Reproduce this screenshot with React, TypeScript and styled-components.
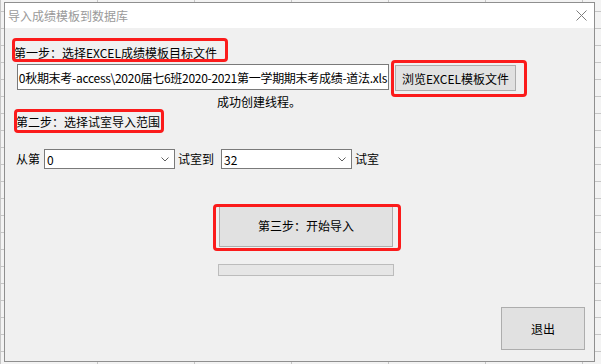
import React from "react";
import styled, { createGlobalStyle } from "styled-components";

const GlobalStyle = createGlobalStyle`
  html, body { margin: 0; padding: 0; }
  body {
    width: 601px;
    height: 364px;
    overflow: hidden;
    font-family: "Noto Sans CJK SC", "Noto Sans", sans-serif;
    font-size: 12px;
    color: #000;
  }
`;

const Page = styled.div`
  width: 601px;
  height: 364px;
  box-sizing: border-box;
  padding: 2px 0 0 4px;
  background-color: #f3f3f3;
  background-image: linear-gradient(#c6c6c6 1px, transparent 1px),
    linear-gradient(90deg, #c6c6c6 1px, transparent 1px);
  background-size: 100% 17px, 97px 100%;
  background-position: 0 -6px, 0 0;
`;

const Dialog = styled.div`
  width: 591px;
  height: 360px;
  box-sizing: border-box;
  border: 1px solid #8f8f8f;
  background: #f0f0f0;
  display: flex;
  flex-direction: column;
`;

const TitleBar = styled.div`
  flex: none;
  height: 25px;
  background: #fff;
  display: flex;
  align-items: center;
  justify-content: space-between;
  padding: 0 7px 0 3px;
`;

const Title = styled.span`
  color: #9a9a9a;
  font-size: 12px;
  line-height: 16px;
`;

const Body = styled.div`
  flex: 1;
  display: flex;
  flex-direction: column;
  align-items: flex-start;
`;

const Highlight = styled.div<{ $w: number; $h: number; $pad: string; $mt: number; $ml: number }>`
  position: relative;
  box-sizing: border-box;
  width: ${(p) => p.$w}px;
  height: ${(p) => p.$h}px;
  margin: ${(p) => p.$mt}px 0 0 ${(p) => p.$ml}px;
  padding: ${(p) => p.$pad};
  display: flex;
  align-items: flex-start;
  flex: none;
  &::after {
    content: "";
    position: absolute;
    inset: 0;
    border: 3px solid #fb1b1b;
    border-radius: 4px;
    pointer-events: none;
  }
`;

const Label = styled.span`
  font-size: 12px;
  line-height: 16px;
  white-space: nowrap;
`;

const Row = styled.div<{ $mt: number; $ml?: number }>`
  display: flex;
  align-items: flex-start;
  margin: ${(p) => p.$mt}px 0 0 ${(p) => p.$ml ?? 0}px;
`;

const TextBox = styled.div`
  box-sizing: border-box;
  width: 372px;
  height: 26px;
  margin: 4px 2px 0 12px;
  border: 1px solid #7a7a7a;
  background: #fff;
  padding: 0 1px 0 3px;
  display: flex;
  align-items: center;
  justify-content: flex-end;
  overflow: hidden;
  white-space: nowrap;
  font-size: 12px;
`;

const TextValue = styled.span`
  flex: none;
  letter-spacing: -0.28px;
`;

const WinButton = styled.button<{ $w: number; $h: number }>`
  box-sizing: border-box;
  width: ${(p) => p.$w}px;
  height: ${(p) => p.$h}px;
  margin: 0;
  padding: 0;
  background: #e1e1e1;
  border: 1px solid #adadad;
  font-family: inherit;
  font-size: 12px;
  color: #000;
  flex: none;
`;

const Status = styled.span`
  margin: -3px 0 0 212px;
  font-size: 12px;
  line-height: 16px;
`;

const RangeRow = styled.div`
  display: flex;
  align-items: center;
  height: 20px;
  margin: 16px 0 0 11px;
`;

const RangeText = styled.span<{ $ml?: number }>`
  margin-left: ${(p) => p.$ml ?? 0}px;
  font-size: 12px;
  line-height: 16px;
`;

const Combo = styled.div<{ $ml: number }>`
  box-sizing: border-box;
  width: 131px;
  height: 20px;
  margin-left: ${(p) => p.$ml}px;
  border: 1px solid #7a7a7a;
  background: #fff;
  display: flex;
  align-items: center;
  justify-content: space-between;
  padding: 0 5px 0 2px;
  font-size: 12px;
`;

const Progress = styled.div`
  box-sizing: border-box;
  width: 176px;
  height: 12px;
  margin: 13px 0 0 213px;
  background: #e6e6e6;
  border: 1px solid #bcbcbc;
`;

const ExitWrap = styled.div`
  margin: 31px 0 0 496px;
`;

const Chevron = () => (
  <svg width="8" height="5" viewBox="0 0 8 5">
    <polyline points="0.5,0.5 4,4 7.5,0.5" fill="none" stroke="#606060" strokeWidth="1" />
  </svg>
);

const CloseIcon = () => (
  <svg width="11" height="11" viewBox="0 0 11 11">
    <line x1="0.5" y1="0.5" x2="10.5" y2="10.5" stroke="#7d7d7d" strokeWidth="1" />
    <line x1="10.5" y1="0.5" x2="0.5" y2="10.5" stroke="#7d7d7d" strokeWidth="1" />
  </svg>
);

export default function App() {
  return (
    <>
      <GlobalStyle />
      <Page>
        <Dialog>
          <TitleBar>
            <Title>导入成绩模板到数据库</Title>
            <CloseIcon />
          </TitleBar>
          <Body>
            <Highlight $w={216} $h={24} $pad="7px 0 0 2px" $mt={10} $ml={7}>
              <Label>第一步：选择EXCEL成绩模板目标文件</Label>
            </Highlight>
            <Row $mt={-2}>
              <TextBox>
                <TextValue>0秋期末考-access\2020届七6班2020-2021第一学期期末考成绩-道法.xls</TextValue>
              </TextBox>
              <Highlight $w={136} $h={37} $pad="5px 0 0 4px" $mt={0} $ml={0}>
                <WinButton $w={121} $h={26}>浏览EXCEL模板文件</WinButton>
              </Highlight>
            </Row>
            <Status>成功创建线程。</Status>
            <Highlight $w={150} $h={24} $pad="5px 0 0 2px" $mt={-1} $ml={9}>
              <Label>第二步：选择试室导入范围</Label>
            </Highlight>
            <RangeRow>
              <RangeText>从第</RangeText>
              <Combo $ml={4}>
                <span>0</span>
                <Chevron />
              </Combo>
              <RangeText $ml={3}>试室到</RangeText>
              <Combo $ml={7}>
                <span>32</span>
                <Chevron />
              </Combo>
              <RangeText $ml={3}>试室</RangeText>
            </RangeRow>
            <Highlight $w={188} $h={47} $pad="0 0 0 6px" $mt={35} $ml={208}>
              <WinButton $w={174} $h={43}>第三步：开始导入</WinButton>
            </Highlight>
            <Progress />
            <ExitWrap>
              <WinButton $w={84} $h={43}>退出</WinButton>
            </ExitWrap>
          </Body>
        </Dialog>
      </Page>
    </>
  );
}
